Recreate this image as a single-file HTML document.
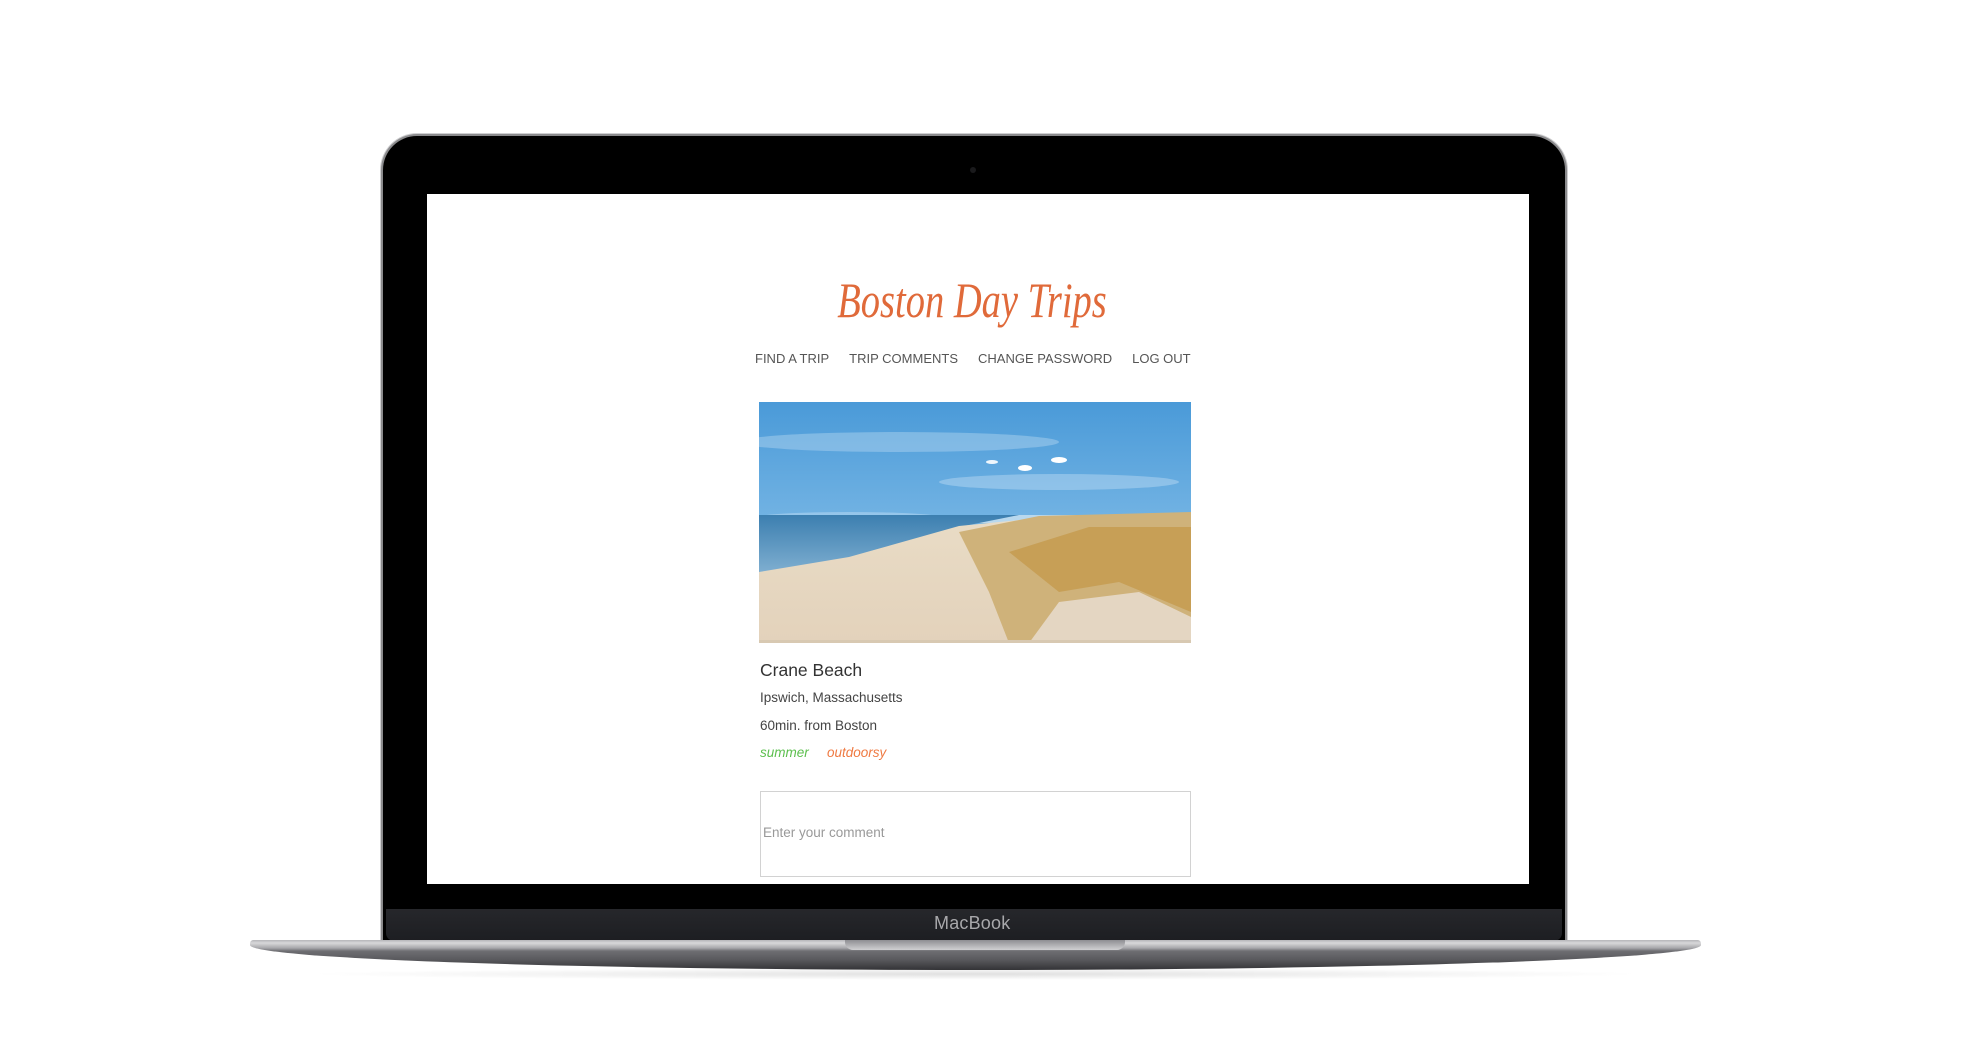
<!DOCTYPE html>
<html><head><meta charset="utf-8"><style>
*{margin:0;padding:0;box-sizing:border-box}
body{width:1984px;height:1059px;background:#fff;position:relative;overflow:hidden;font-family:"Liberation Sans",sans-serif}
.abs{position:absolute}
#bezel{left:383px;top:136px;width:1182px;height:810px;background:#000;border-radius:34px 34px 0 0;box-shadow:0 0 0 2px #8a8a8c, 0 0 0 3px #cfcfd1}
#chin{left:386px;top:909px;width:1176px;height:32px;background:linear-gradient(#26272b,#1d1e22);border-radius:0 0 8px 8px}
#screen{left:427px;top:194px;width:1102px;height:690px;background:#fff;overflow:hidden}
#base{left:250px;top:940px;width:1451px;height:30px;border-radius:4px 4px 60% 60%/4px 4px 100% 100%;background:linear-gradient(#b5b5b8 0,#d8d8da 3px,#a8a8ab 8px,#6e6e72 11px,#58585c 20px,#333336 30px)}
#notch{left:845px;top:940px;width:280px;height:10px;background:linear-gradient(#8e8e92,#d0d0d2);border-radius:0 0 8px 8px}
#shadow{left:300px;top:968px;width:1350px;height:12px;background:radial-gradient(ellipse at center,rgba(0,0,0,.12),rgba(0,0,0,0) 70%)}
.title{left:-6px;width:1102px;top:76px;text-align:center;color:#e06a3a;font-family:"Liberation Serif",serif;font-style:italic;font-size:50px;line-height:60px}
.title span{display:inline-block;transform:scaleX(.77)}
.nav{top:156px;left:328px;font-size:13px;color:#555;white-space:nowrap;line-height:18px}
.nav span{margin-right:20px}
.txt{left:333px;color:#444;font-size:13.5px;line-height:18px}
</style></head><body>
<div class="abs" id="shadow"></div>
<div class="abs" id="bezel"></div>
<div class="abs" style="left:980px;top:167px;width:6px;height:6px;border-radius:50%;background:#1a1a1c;margin-left:-10px"></div>
<div class="abs" id="chin"></div>
<div class="abs" style="left:934px;top:913px;font-size:18px;color:#a8a8ab;letter-spacing:.2px">MacBook</div>
<div class="abs" id="base"></div>
<div class="abs" id="notch"></div>
<div class="abs" id="screen">
  <div class="abs title"><span>Boston Day Trips</span></div>
  <div class="abs nav"><span>FIND A TRIP</span><span>TRIP COMMENTS</span><span>CHANGE PASSWORD</span><span style="margin:0">LOG OUT</span></div>
  <svg class="abs" style="left:332px;top:208px" width="432" height="241" viewBox="0 0 432 241">
    <defs>
      <linearGradient id="sky" x1="0" y1="0" x2="0" y2="1"><stop offset="0" stop-color="#4a9ad8"/><stop offset="1" stop-color="#9ccdef"/></linearGradient>
      <linearGradient id="sea" x1="0" y1="0" x2="0" y2="1"><stop offset="0" stop-color="#3c7fb0"/><stop offset="1" stop-color="#7eaed0"/></linearGradient>
      <linearGradient id="sand" x1="0" y1="0" x2="0" y2="1"><stop offset="0" stop-color="#e9dcc6"/><stop offset="1" stop-color="#e3d2bb"/></linearGradient>
    </defs>
    <rect width="432" height="241" fill="url(#sky)"/>
    <ellipse cx="140" cy="40" rx="160" ry="10" fill="#cfe6f6" opacity=".35"/>
    <ellipse cx="300" cy="80" rx="120" ry="8" fill="#d9ecf8" opacity=".35"/>
    <ellipse cx="90" cy="115" rx="90" ry="5" fill="#d9ecf8" opacity=".35"/>
    <ellipse cx="300" cy="58" rx="8" ry="3" fill="#fff"/>
    <ellipse cx="266" cy="66" rx="7" ry="3" fill="#fff"/>
    <ellipse cx="233" cy="60" rx="6" ry="2" fill="#eef6fc"/>
    <rect y="113" width="432" height="8" fill="#b8d8ee"/>
    <polygon points="0,113 260,113 200,125 90,158 0,170" fill="url(#sea)"/>
    <polygon points="0,170 90,155 200,124 260,118 432,112 432,241 0,241" fill="url(#sand)"/>
    <polygon points="200,130 280,114 432,110 432,241 250,241 230,190" fill="#cfb27a"/>
    <polygon points="250,150 330,125 432,125 432,210 360,180 300,190" fill="#c49a4d" opacity=".8"/>
    <polygon points="270,241 300,200 380,190 432,215 432,241" fill="#e4d6c2"/>
    <rect x="0" y="238" width="432" height="3" fill="#d8c9b2"/>
  </svg>
  <div class="abs txt" style="top:465px;font-size:17.5px;color:#333;line-height:22px">Crane Beach</div>
  <div class="abs txt" style="top:495px">Ipswich, Massachusetts</div>
  <div class="abs txt" style="top:523px">60min. from Boston</div>
  <div class="abs txt" style="top:550px;font-style:italic;color:#5cbf4e">summer</div>
  <div class="abs txt" style="top:550px;left:400px;font-style:italic;color:#ef7a42">outdoorsy</div>
  <div class="abs" style="left:333px;top:597px;width:431px;height:86px;border:1.5px solid #d2d2d2"></div>
  <div class="abs" style="left:336px;top:631px;font-size:13.5px;color:#999">Enter your comment</div>
</div>
</body></html>
